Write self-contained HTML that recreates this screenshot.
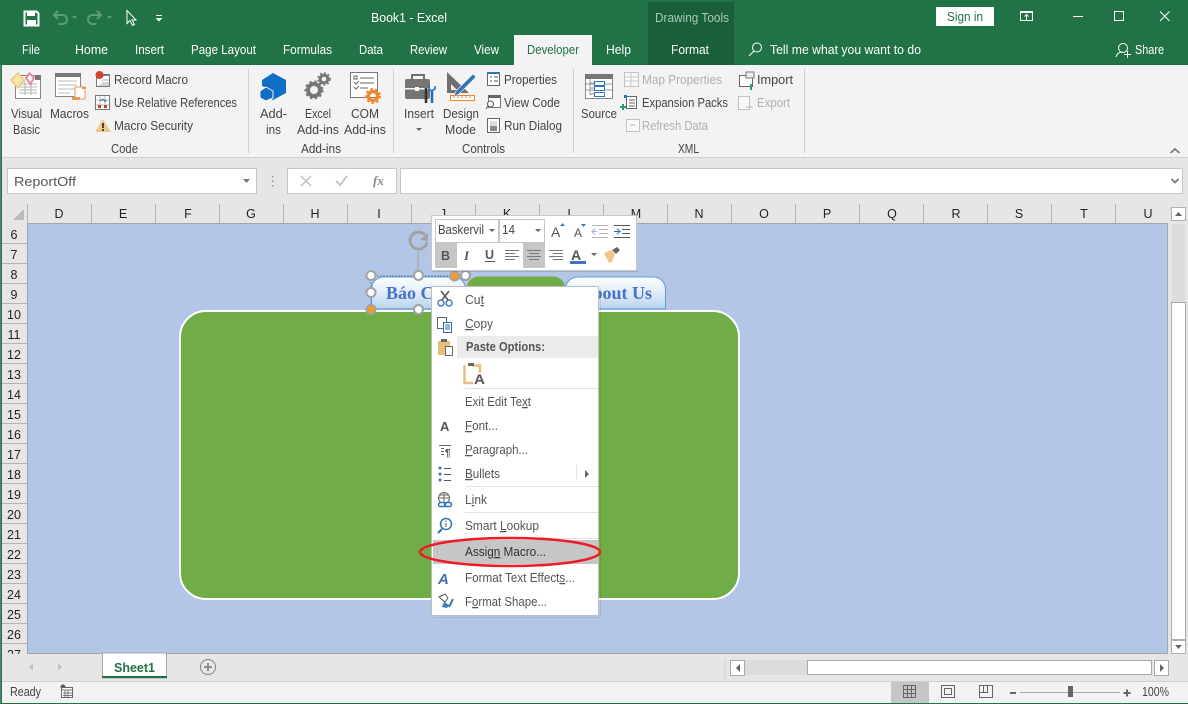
<!DOCTYPE html>
<html><head><meta charset="utf-8"><title>Book1 - Excel</title>
<style>
html,body{margin:0;padding:0;background:#e6e6e6;overflow:hidden}
svg{display:block}
text{font-family:"Liberation Sans",sans-serif;font-size:12.5px;fill:#444}
.w{fill:#fff}
.g{fill:#b0b0b0}
.c{text-anchor:middle;fill:#222;font-size:12.5px}
</style></head>
<body>
<svg xmlns="http://www.w3.org/2000/svg" width="1188" height="704" viewBox="0 0 1188 704">
<rect width="1188" height="704" fill="#e6e6e6"/>
<!-- title -->
<rect width="1188" height="65" fill="#217346"/>
<rect x="648" y="2" width="86" height="63" fill="#1b5e3a"/>
<rect x="514" y="35" width="78" height="30" fill="#f3f3f3"/>
<!-- QAT -->
<path d="M24.500 11.500h12l2 2v12h-14z" fill="none" stroke="#fff" stroke-width="2"/>
<rect x="27" y="11" width="8" height="5" fill="#fff"/><rect x="27" y="20" width="9" height="5" fill="#fff"/>
<path d="M58 11l-4 4 4 4M54.500 15h8a4.500 4.500 0 0 1 0 9h-4" fill="none" stroke="#5d9c79" stroke-width="2"/>
<path d="M72 16h5l-2.500 3z" fill="#5d9c79"/>
<path d="M97 11l4 4-4 4M100.500 15h-8a4.500 4.500 0 0 0 0 9h4" fill="none" stroke="#5d9c79" stroke-width="2"/>
<path d="M107 16h5l-2.500 3z" fill="#5d9c79"/>
<path d="M127 10.500v13l3-3 2.500 5 2-1-2.500-4.500h4z" fill="#217346" stroke="#fff" stroke-width="1"/>
<rect x="156" y="15" width="6" height="1" fill="#fff"/><path d="M155.500 18h7l-3.500 3.500z" fill="#fff"/>
<text x="371" y="22" class="w" textLength="76" lengthAdjust="spacingAndGlyphs">Book1  -  Excel</text>
<text x="655" y="22" style="fill:#a6cbb7" textLength="74" lengthAdjust="spacingAndGlyphs">Drawing Tools</text>
<rect x="936" y="7" width="58" height="19" fill="#fff"/>
<text x="947" y="21" style="fill:#217346" textLength="36" lengthAdjust="spacingAndGlyphs">Sign in</text>
<!-- window buttons -->
<rect x="1020.500" y="11.500" width="12" height="9" fill="none" stroke="#fff"/><rect x="1020" y="11" width="13" height="2" fill="#fff"/><path d="M1026.500 20v-5M1024.500 16.500l2-2 2 2" fill="none" stroke="#fff"/>
<rect x="1073" y="16" width="10" height="1" fill="#fff"/>
<rect x="1114.500" y="11.500" width="9" height="9" fill="none" stroke="#fff"/>
<path d="M1160 11.500l9.500 9.500M1169.500 11.500l-9.500 9.500" stroke="#fff" fill="none"/>
<!-- tabs -->
<g>
<text x="22" y="54" class="w" textLength="18" lengthAdjust="spacingAndGlyphs">File</text>
<text x="75" y="54" class="w" textLength="33" lengthAdjust="spacingAndGlyphs">Home</text>
<text x="135" y="54" class="w" textLength="29" lengthAdjust="spacingAndGlyphs">Insert</text>
<text x="191" y="54" class="w" textLength="65" lengthAdjust="spacingAndGlyphs">Page Layout</text>
<text x="283" y="54" class="w" textLength="49" lengthAdjust="spacingAndGlyphs">Formulas</text>
<text x="359" y="54" class="w" textLength="24" lengthAdjust="spacingAndGlyphs">Data</text>
<text x="410" y="54" class="w" textLength="37" lengthAdjust="spacingAndGlyphs">Review</text>
<text x="474" y="54" class="w" textLength="25" lengthAdjust="spacingAndGlyphs">View</text>
<text x="527" y="54" style="fill:#217346" textLength="52" lengthAdjust="spacingAndGlyphs">Developer</text>
<text x="606" y="54" class="w" textLength="25" lengthAdjust="spacingAndGlyphs">Help</text>
<text x="671" y="54" class="w" textLength="38" lengthAdjust="spacingAndGlyphs">Format</text>
<circle cx="757" cy="47.500" r="4.500" fill="none" stroke="#fff"/><path d="M754 51l-5 5" stroke="#fff" fill="none"/>
<text x="770" y="54" class="w" textLength="151" lengthAdjust="spacingAndGlyphs">Tell me what you want to do</text>
<circle cx="1123" cy="48" r="4.500" fill="none" stroke="#fff"/><path d="M1116 57c1-4 4-5 7-5" fill="none" stroke="#fff"/><path d="M1124 54.500h7M1127.500 51v7" stroke="#fff"/>
<text x="1135" y="54" class="w" textLength="29" lengthAdjust="spacingAndGlyphs">Share</text>
</g>
<!-- ribbon -->
<rect x="2" y="65" width="1186" height="92" fill="#f3f3f3"/>
<rect x="2" y="157" width="1186" height="1" fill="#d0d0d0"/>
<rect x="0" y="65" width="1" height="639" fill="#5d7f6d"/>
<rect x="1" y="0" width="1" height="704" fill="#217346"/>
<rect x="248" y="69" width="1" height="84" fill="#d0d0d0"/><rect x="393" y="69" width="1" height="84" fill="#d0d0d0"/><rect x="573" y="69" width="1" height="84" fill="#d0d0d0"/><rect x="804" y="69" width="1" height="84" fill="#d0d0d0"/>
<!-- VBA icon -->
<rect x="15.500" y="75.500" width="25" height="23" fill="#fff" stroke="#888"/><rect x="35" y="75" width="6" height="5" fill="#777"/>
<path d="M19 84h18M19 87h18M19 90h18M19 93h18M25 81v14M31 81v14" stroke="#b5b5b5"/>
<path d="M11 80l7-7 6.500 7-6.500 8z" fill="#f7e3b0" stroke="#efc878" stroke-width="1.500"/><path d="M26 78l3.500-4.500 4.500 4-3.500 6.500z" fill="#fff" stroke="#e2889b" stroke-width="2"/>
<!-- macros icon -->
<rect x="55.500" y="73.500" width="25" height="23" fill="#fff" stroke="#888"/><rect x="55" y="73" width="26" height="4" fill="#777"/>
<path d="M58 81h19M58 85h19M58 89h19M58 93h12" stroke="#bbb"/>
<rect x="75" y="87" width="10" height="12" fill="#fff" stroke="#e69a52"/><path d="M72 100h8v-3h-8z" fill="#e69a52"/><rect x="82" y="87" width="4" height="2" fill="#e69a52"/>
<!-- small code icons -->
<rect x="96.500" y="74.500" width="13" height="12" fill="#fff" stroke="#777"/><rect x="96" y="74" width="14" height="2" fill="#777"/><path d="M102 80h7M102 83h7M99 85h10" stroke="#aaa"/><circle cx="99.500" cy="75" r="4" fill="#d2452b"/>
<rect x="95.500" y="95.500" width="14" height="14" fill="#fff" stroke="#777"/><path d="M100 96v13M105 96v13M96 100h13M96 105h13" stroke="#bbb"/><rect x="98" y="105" width="3" height="3" fill="#c8442b"/><rect x="104" y="105" width="3" height="3" fill="#c8442b"/><path d="M100 101c2-2 4-2 6 1" fill="none" stroke="#3c78b9" stroke-width="1.400"/>
<path d="M103 119l8 13h-16z" fill="#f0c88a"/><rect x="102" y="123" width="2" height="5" fill="#444"/><rect x="102" y="129" width="2" height="2" fill="#444"/>
<text x="114" y="84" textLength="74" lengthAdjust="spacingAndGlyphs">Record Macro</text>
<text x="114" y="107" textLength="123" lengthAdjust="spacingAndGlyphs">Use Relative References</text>
<text x="114" y="130" textLength="79" lengthAdjust="spacingAndGlyphs">Macro Security</text>
<text x="11" y="118" textLength="31" lengthAdjust="spacingAndGlyphs">Visual</text>
<text x="13" y="134" textLength="27" lengthAdjust="spacingAndGlyphs">Basic</text>
<text x="50" y="118" textLength="39" lengthAdjust="spacingAndGlyphs">Macros</text>
<text x="111" y="153" textLength="27" lengthAdjust="spacingAndGlyphs">Code</text>
<!-- add-ins icons -->
<path d="M273 73l13 7v13l-13 7-6-3v-9l-5-2v-6z" fill="#0f6fc6"/><path d="M266 87l7 4v7l-7 3-6-3v-7z" fill="#0f6fc6" stroke="#f3f3f3"/>
<circle cx="314" cy="90" r="6" fill="none" stroke="#777" stroke-width="4"/><circle cx="314" cy="90" r="8.500" fill="none" stroke="#777" stroke-width="2" stroke-dasharray="2.500 2.500"/>
<circle cx="324" cy="79" r="3.800" fill="none" stroke="#777" stroke-width="3"/><circle cx="324" cy="79" r="6" fill="none" stroke="#777" stroke-width="1.500" stroke-dasharray="2 2"/>
<rect x="350.500" y="72.500" width="27" height="25" fill="#fff" stroke="#777"/><path d="M360 78h14M360 83h14M360 88h8" stroke="#666"/><rect x="354" y="76" width="3" height="3" fill="none" stroke="#666"/><path d="M354 82l2 2 3-3M354 87l2 2 3-3" fill="none" stroke="#666"/>
<circle cx="373" cy="96" r="4.500" fill="none" stroke="#ed8a2f" stroke-width="3.500"/><circle cx="373" cy="96" r="7" fill="none" stroke="#ed8a2f" stroke-width="2" stroke-dasharray="2.500 2.500"/>
<text x="260" y="118" textLength="27" lengthAdjust="spacingAndGlyphs">Add-</text>
<text x="266" y="134" textLength="15" lengthAdjust="spacingAndGlyphs">ins</text>
<text x="305" y="118" textLength="26" lengthAdjust="spacingAndGlyphs">Excel</text>
<text x="297" y="134" textLength="42" lengthAdjust="spacingAndGlyphs">Add-ins</text>
<text x="351" y="118" textLength="28" lengthAdjust="spacingAndGlyphs">COM</text>
<text x="344" y="134" textLength="42" lengthAdjust="spacingAndGlyphs">Add-ins</text>
<text x="301" y="153" textLength="40" lengthAdjust="spacingAndGlyphs">Add-ins</text>
<!-- controls icons -->
<path d="M412 79v-4h12v4" fill="none" stroke="#707070" stroke-width="2"/>
<rect x="405" y="79" width="25" height="20" rx="2" fill="#757575"/><rect x="405" y="88" width="25" height="1.500" fill="#f3f3f3"/><rect x="415" y="87" width="4" height="4" fill="#fff"/>
<path d="M432 90v13" stroke="#1e6fb5" stroke-width="2.500"/><path d="M429 86v3l3 2 3-2v-3" stroke="#1e6fb5" stroke-width="1.500" fill="none"/><path d="M426 88v15" stroke="#333" stroke-width="2.500"/>
<path d="M447 72v21h22z" fill="#707070"/><path d="M451 84v6h6z" fill="#f3f3f3"/>
<path d="M456 91l17-17 3 3-17 17-5 2z" fill="#2e75b6" stroke="#f3f3f3" stroke-width=".6"/>
<rect x="450.500" y="95.500" width="24" height="5" fill="#fff" stroke="#ed8a2f"/><path d="M454 96v2M458 96v2M462 96v2M466 96v2M470 96v2" stroke="#ed8a2f"/>
<rect x="487.500" y="72.500" width="12" height="13" fill="#fff" stroke="#666"/><rect x="487" y="72" width="13" height="2" fill="#2e75b6"/><path d="M490 77h2M494 77h4M490 81h2M494 81h4" stroke="#555"/>
<rect x="488.500" y="96.500" width="12" height="11" fill="#fff" stroke="#777"/><rect x="488" y="95" width="13" height="3" fill="#666"/><circle cx="490.500" cy="104" r="3" fill="#fff" stroke="#555"/><path d="M488 106l-2 3" stroke="#555"/>
<rect x="487.500" y="118.500" width="12" height="14" fill="#fff" stroke="#666"/><rect x="490" y="121" width="7" height="5" fill="#ddd"/><rect x="490" y="126" width="7" height="5" fill="#888"/>
<text x="504" y="84" textLength="53" lengthAdjust="spacingAndGlyphs">Properties</text>
<text x="504" y="107" textLength="56" lengthAdjust="spacingAndGlyphs">View Code</text>
<text x="504" y="130" textLength="58" lengthAdjust="spacingAndGlyphs">Run Dialog</text>
<text x="404" y="118" textLength="30" lengthAdjust="spacingAndGlyphs">Insert</text>
<path d="M416 128h6l-3 3z" fill="#666"/>
<text x="443" y="118" textLength="36" lengthAdjust="spacingAndGlyphs">Design</text>
<text x="445" y="134" textLength="31" lengthAdjust="spacingAndGlyphs">Mode</text>
<text x="462" y="153" textLength="43" lengthAdjust="spacingAndGlyphs">Controls</text>
<!-- xml icons -->
<rect x="585.500" y="74.500" width="27" height="24" fill="#fff" stroke="#888"/><rect x="585" y="74" width="28" height="5" fill="#777"/>
<path d="M590 79v16M590 83h4M590 88h4M590 94h4M586 84h26M586 90h26" stroke="#999"/>
<rect x="594.500" y="81.500" width="10" height="4" fill="#fff" stroke="#2e75b6"/><rect x="594.500" y="86.500" width="10" height="4" fill="#fff" stroke="#2e75b6"/><rect x="594.500" y="92.500" width="10" height="4" fill="#fff" stroke="#2e75b6"/>
<g opacity=".45"><rect x="624.500" y="72.500" width="14" height="14" fill="#fff" stroke="#888"/><path d="M625 77h13M625 81h13M631 73v13" stroke="#999"/></g>
<rect x="626.500" y="96.500" width="10" height="12" fill="#fff" stroke="#666"/><path d="M629 100h6M629 103h6M629 106h6" stroke="#666"/><path d="M623 104v6M620 107h6" stroke="#2d9c75" stroke-width="2"/><rect x="624" y="95" width="3" height="3" fill="#2e75b6"/>
<g opacity=".45"><rect x="626.500" y="119.500" width="13" height="12" fill="#fff" stroke="#888"/><path d="M630 125h5" stroke="#666"/></g>
<text x="642" y="84" class="g" textLength="80" lengthAdjust="spacingAndGlyphs">Map Properties</text>
<text x="642" y="107" textLength="86" lengthAdjust="spacingAndGlyphs">Expansion Packs</text>
<text x="642" y="130" class="g" textLength="66" lengthAdjust="spacingAndGlyphs">Refresh Data</text>
<rect x="739.500" y="75.500" width="13" height="11" fill="#fff" stroke="#666"/><rect x="746" y="72" width="8" height="6" fill="#eee" stroke="#777"/><path d="M751 90v-6" stroke="#2d9c75" stroke-width="2"/>
<g opacity=".45"><rect x="738.500" y="96.500" width="11" height="13" fill="#fff" stroke="#888"/><path d="M746 107h7" stroke="#777"/></g>
<text x="757" y="84" textLength="36" lengthAdjust="spacingAndGlyphs">Import</text>
<text x="757" y="107" class="g" textLength="33" lengthAdjust="spacingAndGlyphs">Export</text>
<text x="581" y="118" textLength="36" lengthAdjust="spacingAndGlyphs">Source</text>
<text x="678" y="153" textLength="21" lengthAdjust="spacingAndGlyphs">XML</text>
<path d="M1170.500 153l4.500-4 4.500 4" fill="none" stroke="#777" stroke-width="1.600"/>
<!-- formula bar -->
<rect x="7.500" y="168.500" width="249" height="25" fill="#fff" stroke="#c6c6c6"/>
<text x="14" y="186" style="fill:#555;font-size:13px" textLength="62" lengthAdjust="spacingAndGlyphs">ReportOff</text>
<path d="M243 179h7l-3.500 4z" fill="#777"/>
<path d="M272 176h1.500v1.500H272zM272 180.500h1.500V182H272zM272 185h1.500v1.500H272z" fill="#999"/>
<rect x="287.500" y="168.500" width="109" height="25" fill="#fff" stroke="#c6c6c6"/>
<path d="M301 176l10 10M311 176l-10 10" stroke="#c8c8c8" stroke-width="1.600" fill="none"/>
<path d="M336 181l4 4 7-9" stroke="#c8c8c8" stroke-width="2" fill="none"/>
<text x="373" y="185" style="font-family:'Liberation Serif',serif;font-style:italic;font-weight:bold;fill:#888;font-size:13px">fx</text>
<rect x="400.500" y="168.500" width="782" height="25" fill="#fff" stroke="#c6c6c6"/>
<path d="M1171.500 179l3.500 3.500 3.500-3.500" fill="none" stroke="#777" stroke-width="1.800"/>
<!-- col headers -->
<path d="M24 209v11h-11z" fill="#b9b9b9"/>
<path d="M27.500 204v19M91.500 204v19M155.500 204v19M219.500 204v19M283.500 204v19M347.500 204v19M411.500 204v19M475.500 204v19M539.500 204v19M603.500 204v19M667.500 204v19M731.500 204v19M795.500 204v19M859.500 204v19M923.500 204v19M987.500 204v19M1051.500 204v19M1115.500 204v19" stroke="#b4b4b4"/>
<g>
<text x="59" y="218" class="c">D</text><text x="123" y="218" class="c">E</text><text x="188" y="218" class="c">F</text><text x="251" y="218" class="c">G</text><text x="315" y="218" class="c">H</text><text x="379" y="218" class="c">I</text><text x="443" y="218" class="c">J</text><text x="507" y="218" class="c">K</text><text x="571" y="218" class="c">L</text><text x="636" y="218" class="c">M</text><text x="699" y="218" class="c">N</text><text x="764" y="218" class="c">O</text><text x="827" y="218" class="c">P</text><text x="892" y="218" class="c">Q</text><text x="956" y="218" class="c">R</text><text x="1019" y="218" class="c">S</text><text x="1084" y="218" class="c">T</text><text x="1148" y="218" class="c">U</text>
</g>
<!-- rows -->
<path d="M2 243.500h25M2 263.500h25M2 283.500h25M2 303.500h25M2 323.500h25M2 343.500h25M2 363.500h25M2 383.500h25M2 403.500h25M2 423.500h25M2 443.500h25M2 463.500h25M2 483.500h25M2 503.500h25M2 523.500h25M2 543.500h25M2 563.500h25M2 583.500h25M2 603.500h25M2 623.500h25M2 643.500h25" stroke="#b4b4b4"/>
<g>
<text x="14" y="239" class="c">6</text><text x="14" y="259" class="c">7</text><text x="14" y="279" class="c">8</text><text x="14" y="299" class="c">9</text><text x="14" y="319" class="c">10</text><text x="14" y="339" class="c">11</text><text x="14" y="359" class="c">12</text><text x="14" y="379" class="c">13</text><text x="14" y="399" class="c">14</text><text x="14" y="419" class="c">15</text><text x="14" y="439" class="c">16</text><text x="14" y="459" class="c">17</text><text x="14" y="479" class="c">18</text><text x="14" y="499" class="c">19</text><text x="14" y="519" class="c">20</text><text x="14" y="539" class="c">21</text><text x="14" y="559" class="c">22</text><text x="14" y="579" class="c">23</text><text x="14" y="599" class="c">24</text><text x="14" y="619" class="c">25</text><text x="14" y="639" class="c">26</text>
</g>
<svg x="2" y="644" width="26" height="10"><text x="12" y="15" class="c">27</text></svg>
<!-- sheet -->
<rect x="28" y="224" width="1139" height="430" fill="#b4c6e7"/>
<path d="M27.500 223.500h1140M1167.500 223v431M28 653.500h1140M27.500 223v431" stroke="#a6a6a6" fill="none"/>
<!-- v scrollbar -->
<rect x="1168" y="224" width="18" height="430" fill="#e6e6e6"/>
<rect x="1171.500" y="207.500" width="14" height="13" fill="#fff" stroke="#b0b0b0"/><path d="M1175 216l3.500-4 3.500 4z" fill="#666"/>
<rect x="1172" y="224" width="13" height="78" fill="#dcdcdc"/>
<rect x="1171.500" y="302.500" width="14" height="337" fill="#fff" stroke="#aaa"/>
<rect x="1171.500" y="640.500" width="14" height="13" fill="#fff" stroke="#b0b0b0"/><path d="M1175 645h7l-3.500 4z" fill="#666"/>
<!-- shapes -->
<defs><linearGradient id="tg" x1="0" y1="0" x2="0" y2="1"><stop offset="0" stop-color="#fdfeff"/><stop offset=".5" stop-color="#e0ecf8"/><stop offset="1" stop-color="#b7d3ee"/></linearGradient></defs>
<path d="M371.500 309v-20a12 12 0 0 1 12-12h70a12 12 0 0 1 12 12v20z" fill="url(#tg)" stroke="#5b9bd5"/>
<path d="M467 309v-20a12 12 0 0 1 12-12h74a12 12 0 0 1 12 12v20z" fill="#70ad47" stroke="#70ad47"/>
<path d="M565.500 309v-20a12 12 0 0 1 12-12h76a12 12 0 0 1 12 12v20z" fill="url(#tg)" stroke="#5b9bd5"/>
<text x="386" y="299" style="font-family:'Liberation Serif',serif;font-weight:bold;font-size:18px;fill:#4472c4">Báo Cáo</text>
<text x="652" y="299" text-anchor="end" style="font-family:'Liberation Serif',serif;font-weight:bold;font-size:18px;fill:#4472c4">About Us</text>
<rect x="180" y="311" width="559" height="288" rx="26" ry="26" fill="#70ad47" stroke="#fff" stroke-width="2"/>
<path d="M371 276h94M371 276v33M371 309h60" stroke="#5b86b8" stroke-dasharray="2 1" fill="none"/>
<path d="M418 252v24" stroke="#a0a0a0" fill="none"/>
<g fill="#fff" stroke="#a2a2a2" stroke-width="2">
<circle cx="371" cy="275.500" r="4.500"/><circle cx="418.500" cy="275.500" r="4.500"/><circle cx="465.500" cy="275.500" r="4.500"/><circle cx="371" cy="292.500" r="4.500"/><circle cx="418.500" cy="309.500" r="4.500"/>
<circle cx="454.500" cy="276" r="4.500" fill="#f39c1f"/><circle cx="371" cy="309.500" r="4.500" fill="#f39c1f"/>
</g>
<path d="M425 235a8.500 8.500 0 1 0 2 7" fill="none" stroke="#a2a2a2" stroke-width="3"/><path d="M420 240l8 1v-8z" fill="#a2a2a2"/>
<!-- mini toolbar -->
<rect x="431.500" y="215.500" width="205" height="55" fill="#fff" stroke="#c8c8c8"/>
<rect x="432" y="271" width="206" height="1" fill="#000" opacity=".12"/>
<rect x="435.500" y="219.500" width="63" height="23" fill="#fff" stroke="#c6c6c6"/>
<rect x="499.500" y="219.500" width="45" height="23" fill="#fff" stroke="#c6c6c6"/>
<text x="438" y="234" style="fill:#444" textLength="46" lengthAdjust="spacingAndGlyphs">Baskervil</text>
<path d="M489 229h6l-3 3z" fill="#666"/>
<text x="502" y="234" textLength="13" lengthAdjust="spacingAndGlyphs">14</text>
<path d="M535 229h6l-3 3z" fill="#666"/>
<text x="551" y="237" style="font-size:14px;fill:#555">A</text><path d="M560 226h5l-2.500-3z" fill="#3c78b9"/>
<text x="574" y="237" style="font-size:12px;fill:#555">A</text><path d="M581 224h5l-2.500 3z" fill="#3c78b9"/>
<path d="M592 225.500h16M599 229.500h9M599 233.500h9M592 237.500h16" stroke="#b5b5b5"/><path d="M597 231.500h-5l3-3M592 231.500l3 3" stroke="#9db7d5" fill="none"/>
<path d="M614 225.500h16M622 229.500h8M622 233.500h8M614 237.500h16" stroke="#555"/><path d="M614 231.500h6l-3-3M620 231.500l-3 3" stroke="#2e75b6" fill="none"/>
<rect x="435" y="243" width="22" height="25" fill="#c6c6c6"/>
<rect x="523" y="243" width="22" height="25" fill="#c6c6c6"/>
<text x="441" y="260" style="font-weight:bold;fill:#555">B</text>
<text x="464" y="260" style="font-style:italic;font-weight:bold;font-family:'Liberation Serif',serif;font-size:13px;fill:#555">I</text>
<text x="485" y="259" style="fill:#555;font-weight:bold">U</text><rect x="485" y="261" width="10" height="1" fill="#555"/>
<path d="M505 250.500h14M505 253.500h10M505 256.500h14M505 259.500h10" stroke="#777"/>
<path d="M527 250.500h14M529 253.500h10M527 256.500h14M529 259.500h10" stroke="#777"/>
<path d="M549 250.500h14M553 253.500h10M549 256.500h14M553 259.500h10" stroke="#777"/>
<text x="571" y="260" style="font-size:14px;fill:#555;font-weight:bold">A</text><rect x="570" y="261" width="16" height="3" fill="#4472c4"/>
<path d="M591 253h6l-3 3z" fill="#666"/>
<path d="M604 253l7-3 4 4-3 8-3 1z" fill="#edc58a"/><path d="M612 250l5-3 3 3-4 4z" fill="#666"/>
<!-- context menu -->
<rect x="431.500" y="286.500" width="167" height="329" fill="#fff" stroke="#bdbdbd"/>
<rect x="600" y="288" width="1" height="329" fill="#000" opacity=".08"/>
<rect x="433" y="617" width="167" height="1" fill="#000" opacity=".08"/>
<rect x="457" y="336" width="141" height="22" fill="#ebebeb"/>
<rect x="433" y="540" width="165" height="24" fill="#c6c6c6"/>
<path d="M465 388.500h133M465 486.500h133M465 512.500h133M465 538.500h133" stroke="#e2e2e2"/>
<rect x="576" y="465" width="1" height="14" fill="#e2e2e2"/>
<path d="M585 470v8l4-4z" fill="#666"/>
<g>
<text x="465" y="304" style="fill:#555" textLength="19" lengthAdjust="spacingAndGlyphs">Cu<tspan text-decoration="underline">t</tspan></text>
<text x="465" y="328" style="fill:#555" textLength="28" lengthAdjust="spacingAndGlyphs"><tspan text-decoration="underline">C</tspan>opy</text>
<text x="466" y="351" style="fill:#555;font-weight:bold" textLength="79" lengthAdjust="spacingAndGlyphs">Paste Options:</text>
<text x="465" y="406" style="fill:#555" textLength="66" lengthAdjust="spacingAndGlyphs">Exit Edit Te<tspan text-decoration="underline">x</tspan>t</text>
<text x="465" y="430" style="fill:#555" textLength="33" lengthAdjust="spacingAndGlyphs"><tspan text-decoration="underline">F</tspan>ont...</text>
<text x="465" y="454" style="fill:#555" textLength="63" lengthAdjust="spacingAndGlyphs"><tspan text-decoration="underline">P</tspan>aragraph...</text>
<text x="465" y="478" style="fill:#555" textLength="35" lengthAdjust="spacingAndGlyphs"><tspan text-decoration="underline">B</tspan>ullets</text>
<text x="465" y="504" style="fill:#555" textLength="22" lengthAdjust="spacingAndGlyphs">L<tspan text-decoration="underline">i</tspan>nk</text>
<text x="465" y="530" style="fill:#555" textLength="74" lengthAdjust="spacingAndGlyphs">Smart <tspan text-decoration="underline">L</tspan>ookup</text>
<text x="465" y="556" style="fill:#333" textLength="81" lengthAdjust="spacingAndGlyphs">Assig<tspan text-decoration="underline">n</tspan> Macro...</text>
<text x="465" y="582" style="fill:#555" textLength="110" lengthAdjust="spacingAndGlyphs">Format Text Effect<tspan text-decoration="underline">s</tspan>...</text>
<text x="465" y="606" style="fill:#555" textLength="82" lengthAdjust="spacingAndGlyphs">F<tspan text-decoration="underline">o</tspan>rmat Shape...</text>
</g>
<!-- menu icons -->
<circle cx="441" cy="303" r="3" fill="none" stroke="#3c78b9" stroke-width="1.400"/><circle cx="449" cy="303" r="3" fill="none" stroke="#3c78b9" stroke-width="1.400"/>
<path d="M442 300l7-9M448 300l-7-9" stroke="#555" stroke-width="1.500" fill="none"/>
<rect x="437.500" y="317.500" width="9" height="11" fill="#fff" stroke="#666"/><rect x="443.500" y="322.500" width="8" height="10" fill="#fff" stroke="#2e6da8"/><path d="M445 325h5M445 327h5M445 329h5" stroke="#2e6da8"/>
<rect x="438" y="341" width="12" height="14" fill="#e8bd7d"/><rect x="441" y="339" width="6" height="3" fill="#666"/><rect x="445.500" y="346.500" width="7" height="9" fill="#fff" stroke="#666"/>
<path d="M464.500 365v18h8.500M472 365.500h8v7" fill="none" stroke="#e8bd7d" stroke-width="2.500"/><rect x="468" y="363" width="6" height="3" fill="#666"/>
<text x="474" y="384" style="font-size:14px;font-weight:bold;fill:#555" textLength="11" lengthAdjust="spacingAndGlyphs">A</text>
<text x="440" y="431" style="font-size:13px;font-weight:bold;fill:#555">A</text>
<path d="M439 445.500h12M441 448.500h3M441 451.500h3M441 454.500h3" stroke="#666"/><text x="445" y="456" style="font-size:10px;font-weight:bold;fill:#555">¶</text>
<circle cx="440" cy="468" r="1.500" fill="#3c78b9"/><circle cx="440" cy="474" r="1.500" fill="#3c78b9"/><circle cx="440" cy="480" r="1.500" fill="#3c78b9"/>
<path d="M444 468.500h7M444 474.500h7M444 480.500h7" stroke="#555"/>
<circle cx="444" cy="498" r="5.500" fill="#fff" stroke="#666"/><path d="M438.500 498h11M444 492.500v11M440 495h8" stroke="#666"/>
<rect x="438.500" y="502.500" width="7" height="4" rx="2" fill="#fff" stroke="#2e75b6" stroke-width="1.500"/><rect x="444.500" y="502.500" width="7" height="4" rx="2" fill="none" stroke="#2e75b6" stroke-width="1.500"/>
<circle cx="446" cy="524" r="5.500" fill="#fff" stroke="#2e75b6" stroke-width="1.500"/><path d="M442 529l-4 4" stroke="#2e75b6" stroke-width="2"/><path d="M446 523v4M446 520.500v1.500" stroke="#555"/>
<text x="438" y="584" style="font-size:15px;font-weight:bold;font-style:italic;fill:#3f72ad">A</text>
<path d="M439 597l6-3 3 4-3 4z" fill="#fff" stroke="#555"/><path d="M449 607l4-8" stroke="#3c78b9" stroke-width="2"/><path d="M442 607l5 1 2-3-5-3z" fill="#3c78b9"/>
<!-- red ellipse -->
<ellipse cx="510" cy="552" rx="90" ry="14" fill="none" stroke="#ed1c24" stroke-width="2.500"/>
<!-- sheet tabs -->
<rect x="2" y="654" width="1186" height="27" fill="#e6e6e6"/>
<path d="M33 663v8l-4-4zM58 663v8l4-4z" fill="#c2c2c2"/>
<rect x="102.500" y="653" width="64" height="25" fill="#fff" stroke="#a8a8a8"/>
<rect x="102" y="676" width="65" height="2" fill="#217346"/>
<text x="114" y="672" style="font-weight:bold;fill:#217346" textLength="41" lengthAdjust="spacingAndGlyphs">Sheet1</text>
<circle cx="208" cy="667" r="7.500" fill="none" stroke="#808080"/><path d="M204 667h8M208 663v8" stroke="#777" stroke-width="1.500"/>
<path d="M725 658v22" stroke="#d0d0d0"/>
<rect x="730.500" y="660.500" width="14" height="15" fill="#fff" stroke="#aaa"/><path d="M740 664v8l-4-4z" fill="#666"/>
<rect x="745" y="660" width="62" height="15" fill="#dcdcdc"/>
<rect x="807.500" y="660.500" width="344" height="14" fill="#fff" stroke="#aaa"/>
<rect x="1154.500" y="660.500" width="14" height="15" fill="#fff" stroke="#aaa"/><path d="M1160 664v8l4-4z" fill="#666"/>
<!-- status -->
<rect x="2" y="681" width="1186" height="1" fill="#cfcfcf"/>
<rect x="2" y="682" width="1186" height="21" fill="#f3f3f3"/>
<rect x="0" y="703" width="1188" height="1" fill="#217346"/>
<text x="10" y="696" style="fill:#444" textLength="31" lengthAdjust="spacingAndGlyphs">Ready</text>
<circle cx="63" cy="687" r="2.500" fill="#555"/><rect x="61.500" y="687.500" width="11" height="10" fill="#fff" stroke="#666"/><path d="M62 690h10M63 693h9M63 695.500h9M65 690v7M68 690v7" stroke="#777"/>
<rect x="891" y="682" width="38" height="21" fill="#c6c6c6"/>
<rect x="903.500" y="685.500" width="12" height="12" fill="none" stroke="#666"/><path d="M907.500 686v11M911.500 686v11M904 689.500h11M904 693.500h11" stroke="#666"/>
<rect x="941.500" y="685.500" width="13" height="12" fill="none" stroke="#666"/><rect x="944.500" y="688.500" width="7" height="6" fill="none" stroke="#666"/>
<rect x="979.500" y="685.500" width="13" height="12" fill="none" stroke="#666"/><path d="M987.500 686v6.500H980M983.500 686v6" stroke="#666" fill="none"/>
<rect x="1010" y="692" width="6" height="2" fill="#666"/>
<rect x="1020" y="692" width="100" height="1" fill="#aaa"/>
<rect x="1068" y="686" width="5" height="11" fill="#666"/>
<path d="M1123.500 693h7M1127 689.500v7" stroke="#666" stroke-width="2"/>
<text x="1142" y="696" style="fill:#444" textLength="27" lengthAdjust="spacingAndGlyphs">100%</text>
</svg>
</body></html>
